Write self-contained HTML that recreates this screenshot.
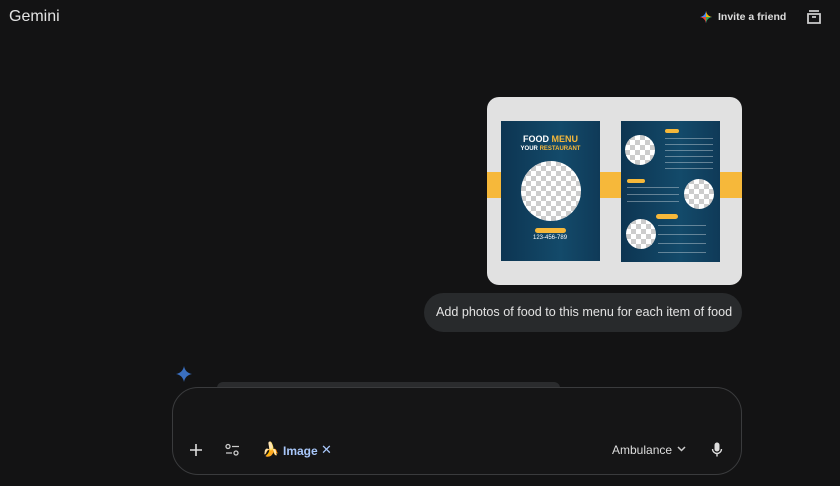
<!DOCTYPE html>
<html><head><meta charset="utf-8"><style>
*{margin:0;padding:0;box-sizing:border-box}
body{width:840px;height:486px;background:#131314;font-family:"Liberation Sans",sans-serif;color:#e3e3e3;position:relative;overflow:hidden}
.abs{position:absolute}
.chk{background-color:#fff;background-image:linear-gradient(45deg,#ccc 25%,transparent 25%,transparent 75%,#ccc 75%),linear-gradient(45deg,#ccc 25%,transparent 25%,transparent 75%,#ccc 75%);background-size:10px 10px;background-position:0 0,5px 5px;border-radius:50%}
.fl{background:linear-gradient(90deg,#0d3552,#134a6a 60%,#0f3a58)}
.ln{position:absolute;height:1px;background:rgba(255,255,255,.35)}
</style></head><body>
<div class="abs" style="left:9px;top:8px;font-size:16px;color:#e3e3e3">Gemini</div>
<svg class="abs" style="left:700px;top:11px" width="12" height="12" viewBox="0 0 12 12"><path d="M6 0C6.6 3.4 8.6 5.4 12 6 8.6 6.6 6.6 8.6 6 12 5.4 8.6 3.4 6.6 0 6 3.4 5.4 5.4 3.4 6 0Z" fill="#4a8af4"/><path d="M6 0C6.6 3.4 8.6 5.4 12 6H6Z" fill="#f4b400"/><path d="M0 6C3.4 6.6 5.4 8.6 6 12V6Z" fill="#e84335"/><path d="M6 12C6.6 8.6 8.6 6.6 12 6H6Z" fill="#34a853"/></svg>
<div class="abs" style="left:718px;top:11px;font-size:10.5px;font-weight:bold;color:#ddd">Invite a friend</div>
<svg class="abs" style="left:806px;top:9px" width="16" height="16" viewBox="0 0 16 16" fill="none" stroke="#ccc" stroke-width="1.8"><path d="M3 2h10M2 5h12v9H2zM6 8h4"/></svg>

<div class="abs" style="left:487px;top:97px;width:255px;height:188px;background:#e1e1e1;border-radius:12px;overflow:hidden">
 <div class="abs" style="left:0;top:75px;width:255px;height:26px;background:#f6b83a"></div>
 <div class="abs fl" style="left:14px;top:24px;width:99px;height:140px">
  <div class="abs" style="left:0;top:13px;width:99px;text-align:center;font-size:9px;font-weight:bold;color:#fff">FOOD <span style="color:#f6b83a">MENU</span></div>
  <div class="abs" style="left:0;top:25px;width:99px;text-align:center;font-size:6px;font-weight:bold;color:#fff">YOUR <span style="color:#f6b83a">RESTAURANT</span></div>
  <div class="abs chk" style="left:20px;top:40px;width:60px;height:60px"></div>
  <div class="abs" style="left:34px;top:107px;width:31px;height:5px;background:#f6b83a;border-radius:3px"></div>
  <div class="abs" style="left:32px;top:114px;font-size:6px;color:#fff">123-456-789</div>
 </div>
 <div class="abs fl" style="left:134px;top:24px;width:99px;height:141px">
  <div class="abs chk" style="left:4px;top:14px;width:30px;height:30px"></div>
  <div class="abs chk" style="left:63px;top:58px;width:30px;height:30px"></div>
  <div class="abs chk" style="left:5px;top:98px;width:30px;height:30px"></div>
  <div class="abs" style="left:44px;top:8px;width:14px;height:4px;background:#f6b83a;border-radius:2px"></div>
  <div class="abs" style="left:6px;top:58px;width:18px;height:4px;background:#f6b83a;border-radius:2px"></div>
  <div class="abs" style="left:35px;top:93px;width:22px;height:5px;background:#f6b83a;border-radius:3px"></div>
  <div class="ln" style="left:44px;top:17px;width:48px"></div><div class="ln" style="left:44px;top:23px;width:48px"></div><div class="ln" style="left:44px;top:29px;width:48px"></div><div class="ln" style="left:44px;top:35px;width:48px"></div><div class="ln" style="left:44px;top:41px;width:48px"></div><div class="ln" style="left:44px;top:47px;width:48px"></div>
  <div class="ln" style="left:6px;top:66px;width:52px"></div><div class="ln" style="left:6px;top:73px;width:52px"></div><div class="ln" style="left:6px;top:80px;width:52px"></div>
  <div class="ln" style="left:37px;top:104px;width:48px"></div><div class="ln" style="left:37px;top:113px;width:48px"></div><div class="ln" style="left:37px;top:122px;width:48px"></div><div class="ln" style="left:37px;top:131px;width:48px"></div>
 </div>
</div>

<div class="abs" style="left:424px;top:293px;width:318px;height:39px;background:#282a2c;border-radius:20px;font-size:12.6px;line-height:39px;padding-left:12px;color:#e3e3e3;white-space:nowrap">Add photos of food to this menu for each item of food</div>

<svg class="abs" style="left:176px;top:366px" width="16" height="16" viewBox="0 0 16 16"><path d="M8 0C8.8 4.5 11.5 7.2 16 8 11.5 8.8 8.8 11.5 8 16 7.2 11.5 4.5 8.8 0 8 4.5 7.2 7.2 4.5 8 0Z" fill="#3a6fc0"/></svg>
<div class="abs" style="left:217px;top:382px;width:343px;height:12px;background:#2a2b2d;border-radius:8px"></div>
<div class="abs" style="left:172px;top:387px;width:570px;height:88px;background:#151516;border:1px solid #3a3b3d;border-radius:26px"></div>
<svg class="abs" style="left:189px;top:443px" width="14" height="14" viewBox="0 0 14 14" stroke="#ddd" stroke-width="1.6"><path d="M7 1v12M1 7h12"/></svg>
<svg class="abs" style="left:225px;top:443px" width="15" height="14" viewBox="0 0 15 14" fill="none" stroke="#ccc" stroke-width="1.3"><circle cx="3" cy="3.5" r="2"/><path d="M7 3.5h7M1 10h6"/><circle cx="11" cy="10" r="2"/></svg>
<div class="abs" style="left:262px;top:441px;font-size:14px">🍌</div>
<div class="abs" style="left:283px;top:444px;font-size:12px;color:#a8c7fa;font-weight:bold">Image</div>
<div class="abs" style="left:321px;top:442px;font-size:13px;color:#a8c7fa">✕</div>
<div class="abs" style="left:612px;top:443px;font-size:12px;color:#ddd">Ambulance</div>
<svg class="abs" style="left:677px;top:446px" width="9" height="6" viewBox="0 0 9 6" fill="none" stroke="#ccc" stroke-width="1.5"><path d="M1 1l3.5 3.5L8 1"/></svg>
<svg class="abs" style="left:711px;top:442px" width="12" height="15" viewBox="0 0 12 15"><rect x="3.5" y="0.5" width="5" height="9" rx="2.5" fill="#ddd"/><path d="M1.5 7a4.5 4.5 0 0 0 9 0M6 11.5v3" stroke="#ddd" stroke-width="1.4" fill="none"/></svg>
</body></html>
